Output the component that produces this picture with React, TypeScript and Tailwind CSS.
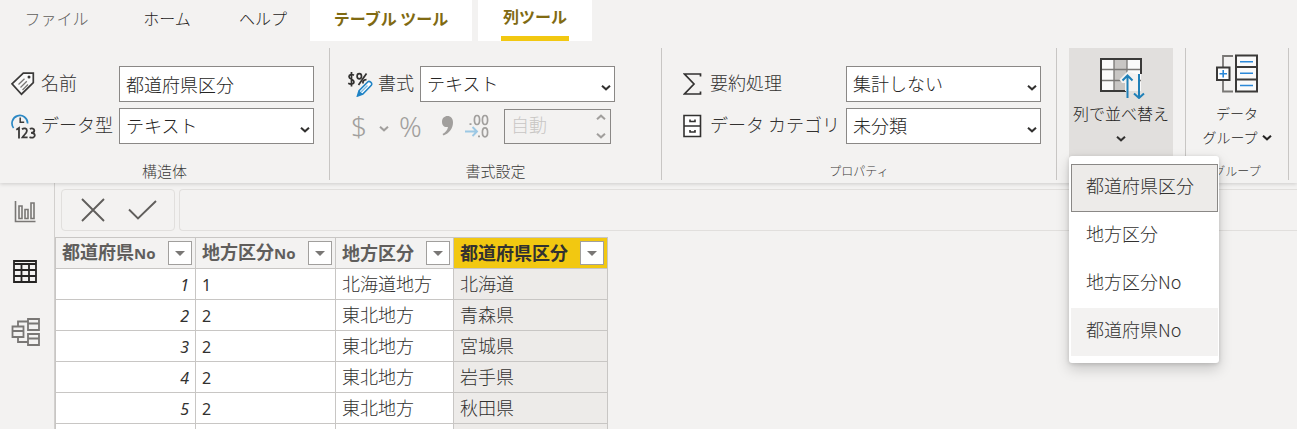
import React from "react";

function Chevron({ className = "", up = false }: { className?: string; up?: boolean }) {
  return (
    <svg viewBox="0 0 10 7" className={`h-[7px] w-[10px] shrink-0 ${className}`} fill="none" stroke="currentColor" strokeWidth="2" aria-hidden="true">
      <path d={up ? "M1 5.3 5 1.7 9 5.3" : "M1 1.7 5 5.3 9 1.7"} />
    </svg>
  );
}

function SelectBox({ id, value, options }: { id: string; value: string; options: string[] }) {
  return (
    <div className="relative w-[195px]">
      <select id={id} defaultValue={value} className="block h-9 w-full appearance-none border border-[#8a8886] bg-white pr-6 pb-0.5 pl-1.5 text-[18px] text-[#252423]">
        {options.map((o) => (
          <option key={o}>{o}</option>
        ))}
      </select>
      <Chevron className="pointer-events-none absolute top-[18px] right-1 text-[#323130]" />
    </div>
  );
}

function TagIcon() {
  return (
    <svg viewBox="0 0 24 24" className="size-6" fill="none" stroke="#3b3a39" aria-hidden="true">
      <path d="M1 11.8 12.3 1.2H22.3V10.6L10.5 22.2Z" strokeWidth="1.7" fill="#fafafa" />
      <circle cx="18" cy="5" r="1.5" fill="#3b3a39" stroke="none" />
      <path d="M7.5 12.5 13.5 6.7M9.5 15.5 15.8 9.3M11.5 18 17 12.5" strokeWidth="1.3" stroke="#797775" />
    </svg>
  );
}

function DataTypeIcon() {
  return (
    <svg viewBox="0 0 25 25" className="size-[25px]" fill="none" aria-hidden="true">
      <path d="M2.6 14A7.8 7.8 0 1 1 16.6 9.5" stroke="#2b88c4" strokeWidth="1.7" />
      <path d="M9.2 3.4V8.3H13.2" stroke="#3b3a39" strokeWidth="1.5" />
      <g stroke="#3b3a39" strokeWidth="1.8">
        <path d="M5.3 15.8 8 14V24.5" />
        <path d="M11 15.3C13 13.6 15.9 14.3 15.9 16.7C15.9 19 13 20.8 11.4 23.4H16.6" />
        <path d="M18.8 14.9C20.8 14 23.3 14.5 23.3 16.5C23.3 18.2 21.8 18.8 20 18.8C22 18.8 23.8 19.4 23.8 21.3C23.8 23.8 20.8 24.2 18.5 23.1" />
      </g>
    </svg>
  );
}

function FormatIcon() {
  return (
    <svg viewBox="0 0 26 26" className="size-[26px]" fill="none" aria-hidden="true">
      <g stroke="#323130" strokeWidth="1.7">
        <path d="M7 4.2C5 3 2 3.3 2 5.7C2 8.7 7 7.8 7 10.9C7 13.4 3.6 13.6 1.2 12.3M4.5 1V15.5" />
        <ellipse cx="12.3" cy="5.3" rx="2.2" ry="2.6" />
        <path d="M19.5 2.5 11.5 14" />
        <path d="M16 12.5V10.5Q17 8.6 19.5 8.6" />
      </g>
      <path d="m10.5 25 1.6-5.4L20.7 11Q22 9.8 23.7 11.2T24.3 14.3L15.8 23Z" fill="#fff" stroke="#1f83c5" strokeWidth="1.6" />
      <path d="m10.5 25 1.6-5.4 3.7 3.4Z" fill="#1f83c5" />
      <path d="m14 21 6.5-6.5" stroke="#7dbbe3" strokeWidth="1.5" />
    </svg>
  );
}

function DecimalIcon() {
  return (
    <svg viewBox="0 0 24 25" className="h-[25px] w-6" fill="none" aria-hidden="true">
      <g stroke="#a19f9d" strokeWidth="1.7">
        <ellipse cx="12" cy="6" rx="2.6" ry="4.5" />
        <ellipse cx="20" cy="6" rx="2.6" ry="4.5" />
        <ellipse cx="20" cy="18.3" rx="2.6" ry="4.5" />
      </g>
      <path d="M4.5 9.2H6.5V11H4.5zM13 21.5H15V23.3H13z" fill="#a19f9d" />
      <path d="M0 17.5H11.5M7.5 13 12 17.5 7.5 22" stroke="#9cc8e4" strokeWidth="1.9" />
    </svg>
  );
}

function SigmaIcon() {
  return (
    <svg viewBox="0 0 20 24" className="h-6 w-5" fill="none" stroke="#323130" strokeWidth="1.7" aria-hidden="true">
      <path d="M17.5 4.5V2H1.5L11 12 1.5 22H17.5V19.5" />
    </svg>
  );
}

function DrawerIcon() {
  return (
    <svg viewBox="0 0 20 24" className="h-6 w-5" fill="none" stroke="#323130" strokeWidth="1.6" aria-hidden="true">
      <path d="M1 1.5H17.5V22.5H1zM1 12H17.5" fill="#fff" />
      <path d="M7 5.5V7.5H12V5.5M7 16V18H12V16" />
    </svg>
  );
}

function SortByColumnIcon() {
  return (
    <svg viewBox="0 0 48 44" className="h-11 w-12" fill="none" aria-hidden="true">
      <path d="M4 4H44V36H4z" fill="#fafafa" />
      <path d="M17 4H30V36H17z" fill="#c8c6c4" />
      <path d="M4 14.5H44M4 25.5H44M17 4V36M30 4V36" stroke="#797775" strokeWidth="1.3" />
      <path d="M44 19V4H4V36H29" stroke="#3b3a39" strokeWidth="2" />
      <path d="M22.5 24.5 30.5 16.5 39 19H43V36H28V28H25Z" fill="#f3f2f1" />
      <path d="M42 19V42M37 38.5 42 43 47 38.5M30.5 43V21M25.5 25.5 30.5 20.5 35.5 25.5" stroke="#2080b8" strokeWidth="2" />
    </svg>
  );
}

function DataGroupIcon() {
  return (
    <svg viewBox="0 0 44 42" className="h-[42px] w-11" fill="none" aria-hidden="true">
      <path d="M18 3H8V38.5H18" stroke="#797775" strokeWidth="1.8" />
      <path d="M2 14.5H14.5V27H2z" fill="#fff" stroke="#3b3a39" strokeWidth="2" />
      <path d="M4.5 20.7H12M8.2 17V24.4" stroke="#2b88d8" strokeWidth="1.6" />
      <path d="M21 2.5H42V38.5H21zM21 14H42M21 26.5H42" fill="#fafafa" stroke="#3b3a39" strokeWidth="2" />
      <path d="M25 8.7H38M25 20.3H38M25 32.5H38" stroke="#2b88d8" strokeWidth="1.6" />
    </svg>
  );
}

function Group({ title, kana = false, className = "", children }: { title?: string; kana?: boolean; className?: string; children: React.ReactNode }) {
  return (
    <section className="flex shrink-0 flex-col border-r border-[#c8c6c4]">
      <div className={`grow ${className}`}>{children}</div>
      {title && <h2 className={`h-4 text-center leading-[14px] text-[#3b3a39] ${kana ? "text-[12px]" : "text-[15px]"}`}>{title}</h2>}
    </section>
  );
}

function ColumnTitle({ text }: { text: string }) {
  const numbered = text.endsWith("No");
  return (
    <span className="pb-0.5">
      {numbered ? text.slice(0, -2) : text}
      {numbered && <span className="font-['Noto_Sans','Noto_Sans_CJK_JP',sans-serif] text-[15px]">No</span>}
    </span>
  );
}

const columns = ["都道府県No", "地方区分No", "地方区分", "都道府県区分"];
const rows = [
  ["1", "1", "北海道地方", "北海道"],
  ["2", "2", "東北地方", "青森県"],
  ["3", "2", "東北地方", "宮城県"],
  ["4", "2", "東北地方", "岩手県"],
  ["5", "2", "東北地方", "秋田県"],
  ["", "", "", ""],
];
const sortOptions = ["都道府県区分", "地方区分", "地方区分No", "都道府県No"];

export default function App() {
  return (
    <div className="flex h-screen flex-col overflow-hidden bg-[#f3f2f1] font-['Noto_Sans_CJK_JP',sans-serif] font-light text-[#323130]">
      <header className="relative z-10 shrink-0 bg-[#f3f2f1] shadow-[0_1px_4px_rgba(0,0,0,0.16)]">
        <nav className="flex h-[41px] text-[16px] leading-8 text-[#252423]">
          <button className="w-[113px] pb-1.5 text-[#605e5c]">ファイル</button>
          <button className="w-[108px] pb-1.5">ホーム</button>
          <button className="w-[84px] pb-1.5">ヘルプ</button>
          <button className="ml-[5px] w-[162px] bg-white pb-1.5 font-bold text-[#806a12]">テーブル ツール</button>
          <button className="ml-1.5 flex w-[114px] justify-center bg-white font-bold text-[#806a12]">
            <span className="h-full border-b-[5px] border-[#f2c811] px-0.5">列ツール</span>
          </button>
        </nav>

        <div className="flex h-[142px] pt-[7px] pb-[3px] text-[18px] leading-8">
          <Group title="構造体" className="pr-[15px] pl-[11px]">
            <div className="grid grid-cols-[30px_78px_195px] items-center gap-y-1.5 pt-[18px]">
              <TagIcon />
              <label htmlFor="name" className="pb-1">名前</label>
              <input id="name" defaultValue="都道府県区分" className="h-9 w-full border border-[#8a8886] bg-white pl-1.5 text-[#252423]" />
              <DataTypeIcon />
              <label htmlFor="type" className="pb-1">データ型</label>
              <SelectBox id="type" value="テキスト" options={["テキスト", "整数", "日付"]} />
            </div>
          </Group>

          <Group title="書式設定" className="pr-[46px] pl-[17px]">
            <div className="flex items-center pt-[18px]">
              <FormatIcon />
              <label htmlFor="format" className="mr-1.5 ml-[5px] pb-1">書式</label>
              <SelectBox id="format" value="テキスト" options={["テキスト"]} />
            </div>
            <div className="mt-1.5 flex h-9 items-center font-['Noto_Sans',sans-serif] text-[28px] font-light text-[#a19f9d]">
              <button disabled aria-label="通貨" className="flex w-[46px] items-center gap-3 pl-1">
                <span>$</span>
                <Chevron className="mt-1" />
              </button>
              <button disabled aria-label="パーセント" className="ml-1.5 w-7 text-left">%</button>
              <button disabled aria-label="桁区切り" className="ml-3.5">
                <svg viewBox="0 0 13 20" className="h-5 w-[13px]" fill="#a19f9d" aria-hidden="true">
                  <path d="M6.5 0C9.8 0 12 2.5 12 6.5C12 12.5 8 17.5 2.5 19.5L1.5 18C4.5 16.5 6.5 14 7 11C3 11.7 1 9.2 1 5.7C1 2.2 3.5 0 6.5 0Z" />
                </svg>
              </button>
              <button disabled aria-label="小数点以下の桁数を減らす" className="ml-[11px]"><DecimalIcon /></button>
              <div className="relative ml-[15px] w-[107px]">
                <input disabled aria-label="小数点以下の桁数" defaultValue="自動" className="block h-[35px] w-full border border-[#8a8886] pb-1 pl-1.5 font-['Noto_Sans_CJK_JP',sans-serif] text-[18px] text-[#c8c6c4]" />
                <div className="absolute top-0 right-[5px] flex h-full flex-col justify-between py-[5px]">
                  <button disabled aria-label="増やす"><Chevron up className="block" /></button>
                  <button disabled aria-label="減らす"><Chevron className="block" /></button>
                </div>
              </div>
            </div>
          </Group>

          <Group title="プロパティ" kana className="pr-[15px] pl-[21px]">
            <div className="grid grid-cols-[27px_136px_195px] items-center gap-y-1.5 pt-[18px]">
              <SigmaIcon />
              <label htmlFor="summary" className="pb-1">要約処理</label>
              <SelectBox id="summary" value="集計しない" options={["集計しない", "合計"]} />
              <DrawerIcon />
              <label htmlFor="category" className="pb-1 whitespace-nowrap">データ カテゴリ</label>
              <SelectBox id="category" value="未分類" options={["未分類", "都道府県"]} />
            </div>
          </Group>

          <Group className="px-3">
            <div className="relative h-full">
              <button className="flex h-[115px] w-[104px] flex-col items-center bg-[#e1dfdd] pt-[7px] text-[16px] leading-6" aria-expanded="true">
                <SortByColumnIcon />
                <span className="mt-0.5 text-[#252423]">列で並べ替え</span>
                <Chevron className="mt-2.5" />
              </button>
              <ul role="menu" className="absolute top-[108px] left-0 z-20 w-[150px] rounded-[3px] bg-white pt-2 pr-px pb-[7px] pl-0.5 shadow-[0_6px_14px_rgba(0,0,0,0.18),0_1px_4px_rgba(0,0,0,0.14)]">
                {sortOptions.map((o, i) => (
                  <li key={o} role="none">
                    <button
                      role="menuitem"
                      className={`block h-12 w-full border pb-1.5 pl-3.5 text-left text-[18px] leading-8 ${
                        i === 0 ? "border-[#8a8886] bg-[#edebe9]" : i === 3 ? "border-transparent bg-[#f3f2f1]" : "border-transparent"
                      }`}
                    >
                      {o}
                    </button>
                  </li>
                ))}
              </ul>
            </div>
          </Group>

          <Group title="グループ" kana className="w-[102px]">
            <button className="flex w-full flex-col items-center pt-[5px] text-[14px] leading-6 text-[#252423]">
              <DataGroupIcon />
              <span className="mt-1.5">データ</span>
              <span className="flex items-center gap-1">グループ<Chevron /></span>
            </button>
          </Group>
        </div>
      </header>

      <div className="flex min-h-0 grow">
        <aside className="flex w-[55px] shrink-0 flex-col items-center border-r border-[#d2d0ce] pt-[18px] pr-1">
          <button aria-label="レポート">
            <svg viewBox="0 0 22 22" className="size-[22px]" fill="none" stroke="#797775" strokeWidth="1.6" aria-hidden="true">
              <path d="M1.5 0V20.5H21.5M5 5H8V17.5H5zM11 8.5H14V17.5H11zM17 2H20V17.5H17z" />
            </svg>
          </button>
          <button aria-label="データ" className="mt-[37px]">
            <svg viewBox="0 0 24 23" className="h-[23px] w-6" fill="none" stroke="#252423" strokeWidth="1.8" aria-hidden="true">
              <path d="M1 1H23V22H1zM1 4H23M1 10H23M1 16H23M8.5 4V22M16 4V22" />
            </svg>
          </button>
          <button aria-label="モデル" className="mt-[34px]">
            <svg viewBox="0 0 29 29" className="size-[29px]" fill="none" stroke="#797775" strokeWidth="1.8" aria-hidden="true">
              <path d="M1.5 9.5H12.5V20H1.5zM1.5 14H12.5M17 2H28V13H17zM17 6.5H28M17 17H28V28H17zM17 21.5H28M7 9.5V4.5H17M7 20V25H17" />
            </svg>
          </button>
        </aside>

        <main className="flex min-w-0 grow flex-col">
          <div className="flex h-[54px] shrink-0 gap-1 pt-1.5 pb-1.5 pl-1.5">
            <div className="flex w-[114px] items-center gap-[23px] rounded-sm border border-[#e1dfdd] pl-[19px]">
              <button aria-label="キャンセル">
                <svg viewBox="0 0 24 24" className="block size-6" fill="none" stroke="#605e5c" strokeWidth="1.9" aria-hidden="true">
                  <path d="M1 1 23 23M23 1 1 23" />
                </svg>
              </button>
              <button aria-label="確定">
                <svg viewBox="0 0 29 20" className="block h-5 w-[29px]" fill="none" stroke="#605e5c" strokeWidth="1.9" aria-hidden="true">
                  <path d="M1 9.5 10 18.5 28 1" />
                </svg>
              </button>
            </div>
            <input aria-label="数式" className="min-w-0 grow rounded-l-sm border border-r-0 border-[#e1dfdd] bg-transparent px-2" />
          </div>

          <table className="w-[553px] table-fixed border-separate border-spacing-0 border-t border-l border-[#c8c6c4] text-[18px]">
            <colgroup>
              <col className="w-[140px]" />
              <col className="w-[140px]" />
              <col className="w-[118px]" />
              <col />
            </colgroup>
            <thead>
              <tr>
                {columns.map((c, i) => (
                  <th
                    key={c}
                    scope="col"
                    className={`h-[31px] border-r border-b border-[#c8c6c4] p-0 text-left font-bold ${i === 3 ? "bg-[#f2c811] text-[#323130]" : "text-[#605e5c]"}`}
                  >
                    <div className="flex items-center justify-between pr-[3px] pl-1.5 leading-6 whitespace-nowrap">
                      <ColumnTitle text={c} />
                      <button aria-label={`${c} フィルター`} className="flex size-6 shrink-0 items-center justify-center border border-[#a19f9d] bg-white">
                        <svg viewBox="0 0 10 5" className="h-[5px] w-2.5" fill="#797775" aria-hidden="true">
                          <path d="M0 0H10L5 5Z" />
                        </svg>
                      </button>
                    </div>
                  </th>
                ))}
              </tr>
            </thead>
            <tbody>
              {rows.map((r, n) => (
                <tr key={n}>
                  {r.map((v, i) => (
                    <td
                      key={i}
                      className={`h-[31px] border-r border-b border-[#c8c6c4] px-1.5 leading-6 ${
                        i === 0
                          ? "bg-white pt-0.5 text-right font-['Noto_Sans',sans-serif] text-[16px] font-normal italic"
                          : i === 1
                            ? "bg-white pt-0.5 font-['Noto_Sans',sans-serif] text-[16px] font-normal"
                            : i === 2
                              ? "bg-white pb-0.5"
                              : "bg-[#edebe9] pb-0.5"
                      }`}
                    >
                      {v}
                    </td>
                  ))}
                </tr>
              ))}
            </tbody>
          </table>
        </main>
      </div>
    </div>
  );
}
